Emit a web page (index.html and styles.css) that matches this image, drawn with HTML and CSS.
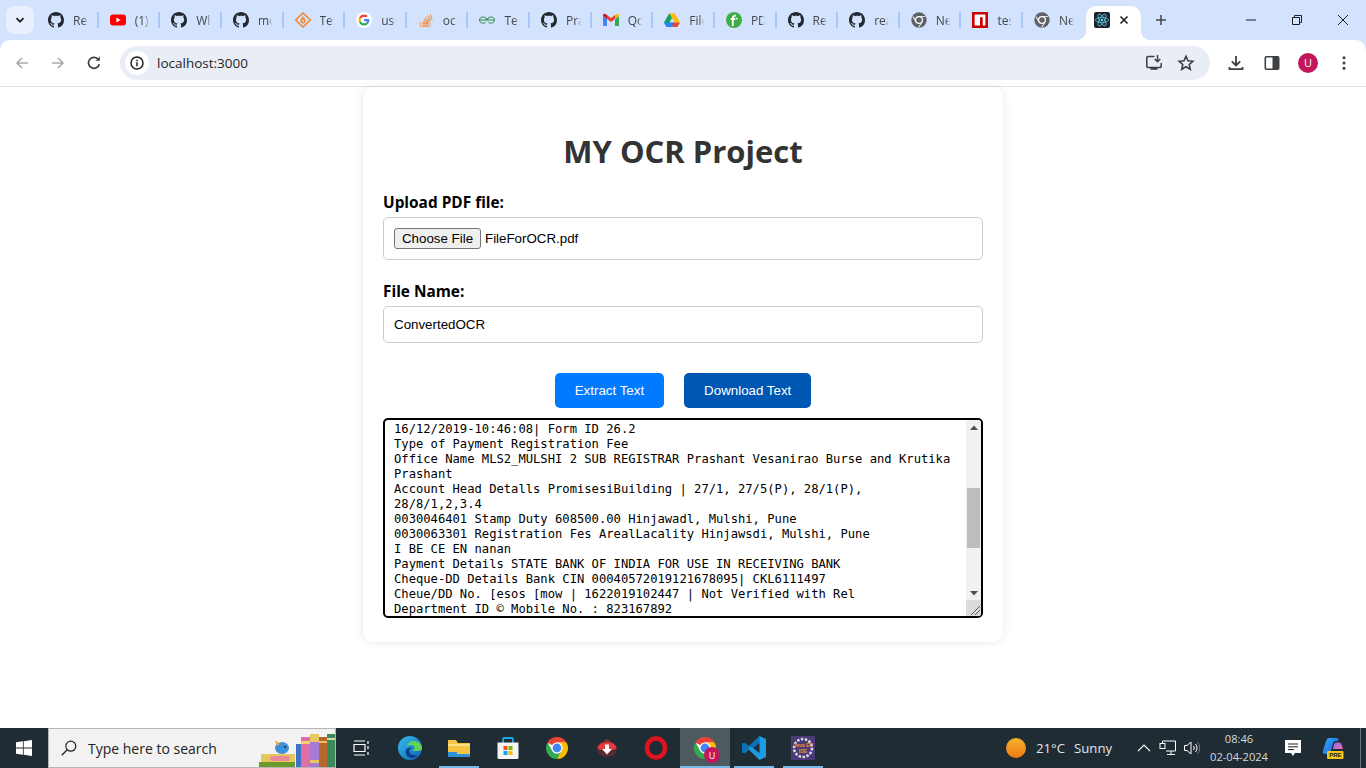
FILE: index.html
```html
<!DOCTYPE html>
<html lang="en">
<head>
<meta charset="utf-8">
<title>MY OCR Project</title>
<link rel="stylesheet" href="styles.css">
</head>
<body>
<svg class="defs" aria-hidden="true">
  <symbol id="gh" viewBox="0 0 16 16"><path fill="#24292f" d="M8 0C3.58 0 0 3.58 0 8c0 3.54 2.29 6.53 5.47 7.59.4.07.55-.17.55-.38 0-.19-.01-.82-.01-1.49-2.01.37-2.53-.49-2.69-.94-.09-.23-.48-.94-.82-1.13-.28-.15-.68-.52-.01-.53.63-.01 1.08.58 1.23.82.72 1.21 1.87.87 2.33.66.07-.52.28-.87.51-1.07-1.78-.2-3.64-.89-3.64-3.95 0-.87.31-1.59.82-2.15-.08-.2-.36-1.02.08-2.12 0 0 .67-.21 2.2.82.64-.18 1.32-.27 2-.27.68 0 1.36.09 2 .27 1.53-1.04 2.2-.82 2.2-.82.44 1.1.16 1.92.08 2.12.51.56.82 1.27.82 2.15 0 3.07-1.87 3.75-3.65 3.95.29.25.54.73.54 1.48 0 1.07-.01 1.93-.01 2.2 0 .21.15.46.55.38A8.013 8.013 0 0016 8c0-4.42-3.58-8-8-8z"/></symbol>
  <symbol id="grey" viewBox="0 0 24 24"><circle cx="12" cy="12" r="11.500" fill="#5f6368"/><circle cx="12" cy="12" r="6" fill="#fff"/><circle cx="12" cy="12" r="4.200" fill="#5f6368"/><path d="M12 6h9.500v1.300H12zM7 15l-4.700-8 1.100-.7L8 14zM16.900 15.200l-4.800 8-1.100-.7 4.800-8z" fill="#fff"/></symbol>
  <symbol id="chrome" viewBox="0 0 24 24"><circle cx="12" cy="12" r="10" fill="#fff"/><path fill="#ea4335" d="M12 1A11 11 0 0 1 21.530 6.500H12A5.500 5.500 0 0 0 7.240 9.250L2.470 6.500A11 11 0 0 1 12 1z"/><path fill="#fbbc04" d="M21.530 6.500A11 11 0 0 1 12 23L16.760 14.750A5.500 5.500 0 0 0 12 6.500z"/><path fill="#34a853" d="M2.470 6.500A11 11 0 0 0 12 23L16.760 14.750A5.500 5.500 0 0 1 7.240 14.750z"/><circle cx="12" cy="12" r="5.500" fill="#fff"/><circle cx="12" cy="12" r="4.400" fill="#4285f4"/></symbol>
</svg>

<header class="browser">
  <div class="tabstrip">
    <button class="tab-menu"><svg class="i12" viewBox="0 0 12 12"><path d="M2.500 4.200 6 7.700l3.500-3.500" fill="none" stroke="#1f1f1f" stroke-width="1.700"/></svg></button>
    <div class="tab"><svg class="fav"><use href="#gh"/></svg><span class="tab-t">Rep</span><i class="sep"></i></div>
    <div class="tab"><svg class="fav" viewBox="0 0 16 16"><rect y="2.500" width="16" height="11" rx="3" fill="#f00"/><path d="M6.400 5.600v4.800L10.600 8z" fill="#fff"/></svg><span class="tab-t">(1)</span><i class="sep"></i></div>
    <div class="tab"><svg class="fav"><use href="#gh"/></svg><span class="tab-t">Wh</span><i class="sep"></i></div>
    <div class="tab"><svg class="fav"><use href="#gh"/></svg><span class="tab-t">me</span><i class="sep"></i></div>
    <div class="tab"><svg class="fav" viewBox="0 0 16 16"><path d="M8 1 15.400 8 8 15 .6 8z" fill="none" stroke="#f4872f" stroke-width="1.600"/><path d="M8 4.200c1.700 2 2.600 3.300 2.600 4.600A2.600 2.600 0 0 1 8 11.400a2.600 2.600 0 0 1-2.600-2.600C5.400 7.500 6.300 6.200 8 4.200z" fill="#f4872f"/><path d="M8 7.500v2.500" stroke="#fff" stroke-width="1"/></svg><span class="tab-t">Tes</span><i class="sep"></i></div>
    <div class="tab"><svg class="fav" viewBox="0 0 48 48"><circle cx="24" cy="24" r="24" fill="#fff"/><g transform="translate(7.500 7.500) scale(.6875)"><path fill="#EA4335" d="M24 9.500c3.540 0 6.710 1.220 9.210 3.600l6.850-6.850C35.900 2.380 30.470 0 24 0 14.620 0 6.510 5.380 2.560 13.220l7.980 6.190C12.430 13.720 17.740 9.500 24 9.500z"/><path fill="#4285F4" d="M46.980 24.550c0-1.570-.15-3.090-.38-4.550H24v9.020h12.940c-.58 2.960-2.260 5.480-4.780 7.180l7.730 6c4.510-4.180 7.090-10.360 7.090-17.650z"/><path fill="#FBBC05" d="M10.530 28.590c-.48-1.450-.76-2.990-.76-4.590s.27-3.140.76-4.590l-7.980-6.190C.92 16.460 0 20.120 0 24c0 3.880.92 7.540 2.560 10.780l7.970-6.190z"/><path fill="#34A853" d="M24 48c6.480 0 11.930-2.130 15.890-5.810l-7.730-6c-2.150 1.450-4.920 2.300-8.160 2.300-6.260 0-11.570-4.220-13.470-9.910l-7.980 6.190C6.510 42.620 14.620 48 24 48z"/></g></svg><span class="tab-t">use</span><i class="sep"></i></div>
    <div class="tab"><svg class="fav" viewBox="0 0 16 16"><path d="M2.500 10v4.700h9.500V10" fill="none" stroke="#f4a460" stroke-width="1"/><path d="M4.300 13.200h5.900M4.400 11.400l5.900.5M4.900 9.400l5.700 1.300M5.900 7.300l5.300 2.500M7.400 5.300l4.600 3.500M9.600 3.600l3.300 4.800M12.200 2.300l1.900 5.400" stroke="#f48024" stroke-width="1" fill="none"/></svg><span class="tab-t">ocr</span><i class="sep"></i></div>
    <div class="tab"><svg class="fav" viewBox="0 0 16 16"><g fill="none" stroke="#2f8d46" stroke-width="1"><path d="M0 8h16"/><path d="M7.700 8A3.600 3.100 0 1 0 6.600 10.300M7.700 8 6.600 5.800"/><path d="M8.300 8A3.600 3.100 0 1 1 9.400 10.300M8.300 8 9.400 5.800"/></g></svg><span class="tab-t">Tes</span><i class="sep"></i></div>
    <div class="tab"><svg class="fav"><use href="#gh"/></svg><span class="tab-t">Pra</span><i class="sep"></i></div>
    <div class="tab"><svg class="fav" viewBox="0 0 16 16"><path fill="#4285f4" d="M1 14h3V7L0 4v8.700C0 13.500.5 14 1 14z"/><path fill="#34a853" d="M12 14h3c.5 0 1-.5 1-1.300V4l-4 3z"/><path fill="#ea4335" d="M4 7V3l4 3 4-3v4L8 10z"/><path fill="#c5221f" d="M0 4v-.8C0 1.900 1.500 1.200 2.500 2L4 3v4z"/><path fill="#fbbc04" d="M12 3l1.500-1c1-.8 2.500-.1 2.500 1.200V4l-4 3z"/></svg><span class="tab-t">Qo</span><i class="sep"></i></div>
    <div class="tab"><svg class="fav" viewBox="0 0 16 16"><path fill="#fbbc04" d="M5.300 1.300h5.400L16 10.600h-5.400z"/><path fill="#0fa15d" d="M5.300 1.300 0 10.600l2.700 4.400L8 6z"/><path fill="#2684fc" d="M5.300 10.600H0L2.700 15h6z"/><path fill="#ea4335" d="M5.300 10.600H16L13.300 15H8.700z"/><path fill="#2684fc" d="M5.300 10.600h4L8 15H2.700z"/></svg><span class="tab-t">File</span><i class="sep"></i></div>
    <div class="tab"><svg class="fav" viewBox="0 0 16 16"><circle cx="8" cy="8" r="8" fill="#3fae49"/><path d="M6.800 14V6.500C6.800 4.500 8 3.500 10 3.700M4.800 7h4.500" fill="none" stroke="#fff" stroke-width="1.800"/><circle cx="10.800" cy="6.600" r=".9" fill="#fff"/></svg><span class="tab-t">PDF</span><i class="sep"></i></div>
    <div class="tab"><svg class="fav"><use href="#gh"/></svg><span class="tab-t">Rep</span><i class="sep"></i></div>
    <div class="tab"><svg class="fav"><use href="#gh"/></svg><span class="tab-t">rea</span><i class="sep"></i></div>
    <div class="tab"><svg class="fav"><use href="#grey"/></svg><span class="tab-t">Ne</span><i class="sep"></i></div>
    <div class="tab"><svg class="fav" viewBox="0 0 16 16"><rect width="16" height="16" fill="#cb0000"/><path d="M2.600 2.600h10.800v10.800h-2.700V5.300H8v8.100H2.600z" fill="#fff"/></svg><span class="tab-t">tes</span><i class="sep"></i></div>
    <div class="tab"><svg class="fav"><use href="#grey"/></svg><span class="tab-t">Ne</span></div>
    <div class="tab-active">
      <svg class="fav" viewBox="0 0 16 16"><rect width="16" height="16" rx="2" fill="#20232a"/><g fill="none" stroke="#61dafb" stroke-width=".7"><ellipse cx="8" cy="8" rx="6.600" ry="2.600"/><ellipse cx="8" cy="8" rx="6.600" ry="2.600" transform="rotate(60 8 8)"/><ellipse cx="8" cy="8" rx="6.600" ry="2.600" transform="rotate(120 8 8)"/></g><circle cx="8" cy="8" r="1.300" fill="#61dafb"/></svg>
      <svg class="i12" viewBox="0 0 12 12"><path d="M2.500 2.500l7 7M9.500 2.500l-7 7" stroke="#1f1f1f" stroke-width="1.600"/></svg>
    </div>
    <button class="new-tab"><svg class="i12" viewBox="0 0 12 12"><path d="M6 1v10M1 6h10" stroke="#444746" stroke-width="1.500"/></svg></button>
    <div class="win-btns">
      <span class="win-btn"><svg class="i12" viewBox="0 0 12 12"><path d="M1 6h10" stroke="#1f1f1f"/></svg></span>
      <span class="win-btn"><svg class="i12" viewBox="0 0 12 12"><path d="M1.500 3.500h7v7h-7zM3.500 3.500v-2h7v7h-2" fill="none" stroke="#1f1f1f"/></svg></span>
      <span class="win-btn"><svg class="i12" viewBox="0 0 12 12"><path d="M1 1l10 10M11 1 1 11" stroke="#1f1f1f"/></svg></span>
    </div>
  </div>
  <div class="toolbar">
    <span class="tool"><svg class="i16" viewBox="0 0 16 16"><path d="M14 8H3M8 3 3 8l5 5" fill="none" stroke="#a9abad" stroke-width="1.600"/></svg></span>
    <span class="tool"><svg class="i16" viewBox="0 0 16 16"><path d="M2 8h11M8 3l5 5-5 5" fill="none" stroke="#a9abad" stroke-width="1.600"/></svg></span>
    <span class="tool"><svg class="i16" viewBox="0 0 16 16"><path d="M13.300 9.200A5.500 5.500 0 1 1 11.900 4" fill="none" stroke="#3c4043" stroke-width="1.700"/><path d="M13.800 1.500v4.300H9.500z" fill="#3c4043"/></svg></span>
    <div class="omnibox">
      <span class="info"><svg class="i16" viewBox="0 0 16 16"><circle cx="8" cy="8" r="6" fill="none" stroke="#1f1f1f" stroke-width="1.500"/><path d="M8 7.200v4M8 4.700v1.500" stroke="#1f1f1f" stroke-width="1.500"/></svg></span>
      <span class="url">localhost:3000</span>
      <span class="omni-icon"><svg class="i18" viewBox="0 0 18 18"><path d="M9.500 2.500H3a1.200 1.200 0 0 0-1.200 1.200v8.600A1.200 1.200 0 0 0 3 13.500h12a1.200 1.200 0 0 0 1.200-1.200V9" fill="none" stroke="#3c4043" stroke-width="1.500"/><path d="M5.500 15.800h7v-2h-7z" fill="#3c4043"/><path d="M12.500 1v6.500M9.700 5l2.800 2.800L15.300 5" fill="none" stroke="#3c4043" stroke-width="1.500"/></svg></span>
      <span class="omni-icon"><svg class="i18" viewBox="0 0 18 18"><path d="M9 2.300l2 4.500 4.900.5-3.700 3.200 1.100 4.800L9 12.800l-4.300 2.500 1.100-4.800L2.100 7.300 7 6.800z" fill="none" stroke="#3c4043" stroke-width="1.600"/></svg></span>
    </div>
    <span class="tool first-right"><svg class="i18" viewBox="0 0 18 18"><path d="M9 2v9.500M4.800 7.300 9 11.500l4.200-4.200" fill="none" stroke="#3c4043" stroke-width="1.800"/><path d="M2.500 13v2.200h13V13" fill="none" stroke="#3c4043" stroke-width="1.800"/></svg></span>
    <span class="tool"><svg class="i18" viewBox="0 0 18 18"><rect x="2.300" y="2.800" width="13.400" height="12.400" rx="1" fill="none" stroke="#3c4043" stroke-width="1.600"/><rect x="9.500" y="2.800" width="6.200" height="12.400" fill="#3c4043"/></svg></span>
    <span class="tool"><span class="avatar">U</span></span>
    <span class="tool"><svg class="i16" viewBox="0 0 16 16"><circle cx="8" cy="2.800" r="1.500" fill="#3c4043"/><circle cx="8" cy="8" r="1.500" fill="#3c4043"/><circle cx="8" cy="13.200" r="1.500" fill="#3c4043"/></svg></span>
  </div>
</header>

<main class="viewport">
  <section class="card">
    <h1 class="title">MY OCR Project</h1>
    <label class="label">Upload PDF file:</label>
    <div class="file-box"><span class="file-btn">Choose File</span><span class="file-name">FileForOCR.pdf</span></div>
    <label class="label label-second">File Name:</label>
    <input class="name-input" type="text" value="ConvertedOCR">
    <div class="actions">
      <button class="btn btn-extract">Extract Text</button>
      <button class="btn btn-download">Download Text</button>
    </div>
    <div class="output">
      <div class="output-text">16/12/2019-10:46:08| Form ID 26.2
Type of Payment Registration Fee
Office Name MLS2_MULSHI 2 SUB REGISTRAR Prashant Vesanirao Burse and Krutika
Prashant
Account Head Detalls PromisesiBuilding | 27/1, 27/5(P), 28/1(P),
28/8/1,2,3.4
0030046401 Stamp Duty 608500.00 Hinjawadl, Mulshi, Pune
0030063301 Registration Fes ArealLacality Hinjawsdi, Mulshi, Pune
I BE CE EN nanan
Payment Details STATE BANK OF INDIA FOR USE IN RECEIVING BANK
Cheque-DD Details Bank CIN 00040572019121678095| CKL6111497
Cheue/DD No. [esos [mow | 1622019102447 | Not Verified with Rel
Department ID © Mobile No. : 823167892</div>
      <div class="scrollbar">
        <span class="sb-arrow"><svg class="i8" viewBox="0 0 8 8"><path d="M0 6h8L4 1.500z" fill="#505050"/></svg></span>
        <span class="sb-track"><span class="sb-thumb"></span></span>
        <span class="sb-arrow"><svg class="i8" viewBox="0 0 8 8"><path d="M0 2h8L4 6.500z" fill="#505050"/></svg></span>
        <span class="sb-corner"><svg class="corner-svg" viewBox="0 0 15 16"><path d="M14 6 5 15M14 10l-5 5" stroke="#555" stroke-width="1"/></svg></span>
      </div>
    </div>
  </section>
</main>

<footer class="taskbar">
  <span class="start"><svg class="i16" viewBox="0 0 16 16"><path d="M0 2.300 6.900 1.300v6.300H0zM7.700 1.200 16 0v7.600H7.700zM0 8.400h6.900v6.300L0 13.700zM7.700 8.400H16V16l-8.300-1.200z" fill="#fff"/></svg></span>
  <div class="search">
    <svg class="i16" viewBox="0 0 16 16"><circle cx="9.800" cy="6.200" r="5" fill="none" stroke="#222" stroke-width="1.200"/><path d="M6.200 9.800 .8 15.200" stroke="#222" stroke-width="1.300"/></svg>
    <span class="search-text">Type here to search</span>
    <svg class="books" viewBox="0 0 78 40">
      <rect x="1" y="34" width="36" height="6" fill="#6a9a2e"/><rect x="3" y="26" width="34" height="8" fill="#e4c85c"/><rect x="12" y="28" width="20" height="5" rx="2.500" fill="#e88a9a"/>
      <ellipse cx="24" cy="20" rx="7" ry="6" fill="#3f8fdc"/><path d="M17 12l5 4-3 2z" fill="#f39c2b"/><circle cx="27" cy="19" r="1" fill="#123"/>
      <rect x="38" y="16" width="5" height="24" fill="#3f73c9"/><rect x="43" y="9" width="9" height="31" fill="#e06fa4"/><rect x="43" y="13" width="9" height="3" fill="#f2d36b"/>
      <rect x="52" y="6" width="9" height="34" fill="#a67ad4"/><rect x="52" y="6" width="9" height="8" fill="#e8c660"/><rect x="52" y="32" width="9" height="3" fill="#e8c660"/>
      <rect x="61" y="9" width="8" height="31" fill="#b8662f"/><rect x="61" y="13" width="8" height="2" fill="#f0c060"/>
      <rect x="69" y="6" width="9" height="34" fill="#3c8a5a"/><rect x="69" y="10" width="9" height="2" fill="#d5e0a0"/>
    </svg>
  </div>
  <div class="apps">
    <span class="app"><svg class="i20" viewBox="0 0 20 20"><path d="M3 3h11M3 17h11M3 6.500h11v7H3zM17 3v3M17 8v3M17 14v3" fill="none" stroke="#fff" stroke-width="1.200"/></svg></span>
    <span class="app"><svg class="i24" viewBox="0 0 24 24"><defs><linearGradient id="edge" x1="0" y1="0" x2="1" y2="1"><stop offset="0" stop-color="#35c1f1"/><stop offset="1" stop-color="#0b5fb0"/></linearGradient></defs><circle cx="12" cy="12" r="12" fill="url(#edge)"/><path d="M24 12.500c0-5-4-7.500-8-7.500-3.500 0-6.500 2-7 5.500 2-2 7-2.500 7.500 1 .2 1.500-1 2.500-2.500 3 3 1 10 1 10-2z" fill="#5fd35a"/><path d="M13 22c-4-1-6-4.500-5-8 1-2.500 4-3 6-2-2 .5-3 2-2.500 4 .6 2.400 4.500 4 8 3-1.500 1.800-4 3.500-6.500 3z" fill="#0f3f8a"/></svg></span>
    <span class="app app-on"><svg class="i24" viewBox="0 0 24 24"><path d="M1 4h8l2 3h12v14H1z" fill="#f4c542"/><rect x="1" y="8" width="22" height="2" fill="#fbe08a"/><path d="M1 16h9v2h13v3H1z" fill="#2f8fd8"/></svg></span>
    <span class="app"><svg class="i24" viewBox="0 0 24 24"><path d="M7 7V3.500A1.500 1.500 0 0 1 8.500 2h7A1.500 1.500 0 0 1 17 3.500V7" fill="none" stroke="#1ea7e8" stroke-width="1.800"/><path d="M1.500 6.500h21v15a1.500 1.500 0 0 1-1.500 1.500H3a1.500 1.500 0 0 1-1.500-1.500z" fill="#f4f4f4"/><rect x="7.500" y="10" width="4" height="4" fill="#f25022"/><rect x="12.500" y="10" width="4" height="4" fill="#7fba00"/><rect x="7.500" y="15" width="4" height="4" fill="#00a4ef"/><rect x="12.500" y="15" width="4" height="4" fill="#ffb900"/></svg></span>
    <span class="app"><svg class="i24"><use href="#chrome"/></svg></span>
    <span class="app"><svg class="i24" viewBox="0 0 24 24"><ellipse cx="12" cy="13" rx="10" ry="8" fill="#5a2a33"/><path d="M2.500 12c1-4 5-6 9.500-6s8.500 2 9.500 6c-2 3-5 1-9.500 1s-7.500 2-9.500-1z" fill="#e23a3f"/><path d="M10 8.500h4V13h3l-5 5.500L7 13h3z" fill="#fff"/><ellipse cx="12" cy="4.500" rx="2.500" ry="1" fill="#a33"/></svg></span>
    <span class="app"><svg class="i24" viewBox="0 0 24 24"><ellipse cx="12" cy="12" rx="9" ry="9.500" fill="none" stroke="#e0141f" stroke-width="4.500"/></svg></span>
    <span class="app app-active"><span class="app-badge-wrap"><svg class="i24"><use href="#chrome"/></svg><span class="app-badge">U</span></span></span>
    <span class="app app-on"><svg class="i24" viewBox="0 0 24 24"><path d="M17.500 0 24 3v18l-6.500 3L7 13.800 2.500 17.300 0 16V8l2.500-1.300L7 10.200zM17.500 7 11 12l6.500 5z" fill="#1e9be0" fill-rule="evenodd"/><path d="M17.500 0v7L11 12 7 10.200zM0 8l2.500-1.300L7 10.200v3.600L2.500 17.300 0 16z" fill="#0a6fb5"/></svg></span>
    <span class="app app-on"><svg class="i24" viewBox="0 0 24 24"><rect width="24" height="24" rx="1" fill="#4b3a7a"/><circle cx="12" cy="12" r="9" fill="none" stroke="#ddd" stroke-width="2.500" stroke-dasharray="2.500 1.500"/><text class="ide-text" x="12" y="10.500">Java EE</text><text class="ide-text" x="12" y="17">IDE</text></svg></span>
  </div>
  <div class="tray">
    <div class="weather"><span class="sun"></span><span class="temp">21°C</span><span class="cond">Sunny</span></div>
    <span class="tray-i"><svg class="i14" viewBox="0 0 14 14"><path d="M1 10l6-6 6 6" fill="none" stroke="#fff" stroke-width="1.100"/></svg></span>
    <span class="tray-i"><svg class="i18" viewBox="0 0 18 18"><path d="M3.500 4.500V2h13v10H7M12 12v3M8 15.500h8" fill="none" stroke="#fff"/><rect x="1" y="4.500" width="5" height="5" fill="none" stroke="#fff"/></svg></span>
    <span class="tray-i"><svg class="i18" viewBox="0 0 18 18"><path d="M1.500 6.500H4L8 3v12l-4-3.500H1.500zM10.500 7a3 3 0 0 1 0 4M12.500 5a6 6 0 0 1 0 8" fill="none" stroke="#fff"/><path d="M14.500 3a9 9 0 0 1 0 12" fill="none" stroke="#777"/></svg></span>
    <div class="clock"><span>08:46</span><span>02-04-2024</span></div>
    <span class="notify"><svg class="i18" viewBox="0 0 18 18"><path d="M1 1h16v13h-6l-2 3-2-3H1z" fill="#fff"/><path d="M4 5h10M4 7.800h10M4 10.600h6" stroke="#222" stroke-width="1"/></svg></span>
    <span class="copilot"><svg class="i22" viewBox="0 0 22 22"><defs><linearGradient id="cpa" x1="0" y1="0" x2="1" y2="1"><stop offset="0" stop-color="#27b6e8"/><stop offset=".55" stop-color="#2a7df0"/><stop offset="1" stop-color="#3ed6a0"/></linearGradient><linearGradient id="cpb" x1="0" y1="0" x2="1" y2="1"><stop offset="0" stop-color="#8a6cf0"/><stop offset="1" stop-color="#f06ab8"/></linearGradient></defs><path d="M7 1h7c1.500 0 2.300.8 2.800 2.500L14 4c-1.500 0-2.300.6-2.800 2.200L8.500 14.500C8 16 7 17 5.500 17H3C1 17 .4 15.500 1 13.700L4 4.300C4.600 2.300 5.500 1 7 1z" fill="url(#cpa)"/><path d="M14 5.500h3c1.300 0 2.200.8 2.700 2.200l1.300 4.300H10.800l1.300-4.400C12.500 6.200 13 5.500 14 5.500z" fill="url(#cpb)"/><rect x="5" y="14" width="16.500" height="8" rx="1" fill="#f5c518"/><text class="pre-text" x="13.300" y="20.300">PRE</text></svg></span>
    <span class="show-desktop"></span>
  </div>
</footer>
</body>
</html>
```

FILE: styles.css
```css
* { box-sizing: border-box; }
html, body { margin: 0; height: 100%; }
body {
  width: 1366px;
  height: 768px;
  overflow: hidden;
  display: flex;
  flex-direction: column;
  background: #fff;
  font-family: "Open Sans", sans-serif;
}
.defs { display: none; }
button { border: 0; background: none; padding: 0; font: inherit; }
svg { display: block; flex: none; }
.i8 { width: 8px; height: 8px; }
.i12 { width: 12px; height: 12px; }
.i14 { width: 14px; height: 14px; }
.i16 { width: 16px; height: 16px; }
.i18 { width: 18px; height: 18px; }
.i20 { width: 20px; height: 20px; }
.i22 { width: 22px; height: 22px; }
.i24 { width: 24px; height: 24px; }

/* browser chrome */
.browser { background: #d3e3fd; flex: none; }
.tabstrip { height: 40px; display: flex; align-items: stretch; }
.tab-menu {
  width: 28px; height: 28px; margin: 6px 3px 0 6px;
  border-radius: 8px; background: #e8f0fe;
  display: flex; align-items: center; justify-content: center;
}
.tab {
  width: 61.625px; flex: none;
  display: flex; align-items: center;
  padding-left: 11px;
  gap: 9px;
}
.fav { width: 16px; height: 16px; flex: none; }
.tab-t {
  width: 14.500px; overflow: hidden; white-space: nowrap;
  font-size: 12px; color: #45474a;
  -webkit-mask-image: linear-gradient(to right, #000 70%, transparent);
  mask-image: linear-gradient(to right, #000 70%, transparent);
}
.sep { width: 2px; height: 16px; margin-left: auto; background: #a8c7fa; }
.tab-active {
  position: relative;
  width: 55px; height: 34px; margin: 6px 0 0 1.500px;
  background: #fff; border-radius: 10px 10px 0 0;
  display: flex; align-items: center; justify-content: space-between;
  padding: 0 11px 6px 8px;
}
.tab-active::before, .tab-active::after {
  content: ""; position: absolute; bottom: 0; width: 10px; height: 10px;
}
.tab-active::before { left: -10px; background: radial-gradient(circle at 0 0, transparent 10px, #fff 10.500px); }
.tab-active::after { right: -10px; background: radial-gradient(circle at 100% 0, transparent 10px, #fff 10.500px); }
.new-tab { width: 28px; height: 28px; margin: 6px 0 0 6px; display: flex; align-items: center; justify-content: center; }
.win-btns { margin-left: auto; display: flex; }
.win-btn { width: 46px; height: 40px; display: flex; align-items: center; justify-content: center; }

.toolbar {
  height: 47px; padding: 6px 4px 7px;
  background: #fff; border-radius: 10px 10px 0 0;
  border-bottom: 1px solid #e3e3e3;
  display: flex; align-items: center;
}
.tool { width: 36px; height: 34px; display: flex; align-items: center; justify-content: center; flex: none; }
.first-right { margin-left: 8px; }
.omnibox {
  flex: 1; height: 34px; margin-left: 8px; padding: 0 12px 0 5px;
  background: #e9eef6; border-radius: 17px;
  display: flex; align-items: center;
}
.info { width: 24px; height: 24px; border-radius: 50%; background: #fff; display: flex; align-items: center; justify-content: center; }
.url { margin-left: 8px; font-size: 13.500px; color: #1f1f1f; flex: 1; }
.omni-icon { width: 24px; height: 24px; margin-left: 8px; display: flex; align-items: center; justify-content: center; }
.avatar {
  width: 20px; height: 20px; border-radius: 50%; background: #c2185b;
  color: #fff; font-size: 11px; display: flex; align-items: center; justify-content: center;
}

/* page */
.viewport { flex: 1; display: flex; justify-content: center; align-items: flex-start; min-height: 0; }
.card {
  width: 640px; padding: 20px 20px 24px;
  background: #fff; border-radius: 10px;
  box-shadow: 0 0 10px rgba(0, 0, 0, .1);
  display: flex; flex-direction: column;
}
.title {
  margin: 22px 0 19px; text-align: center;
  font-size: 31px; line-height: 44px; font-weight: 700; color: #333;
}
.label { font-size: 15.400px; line-height: 20px; font-weight: 700; color: #000; margin: 1px 0 4px; }
.label-second { margin-top: 22px; }
.file-box {
  height: 43px; padding: 0 10px;
  border: 1px solid #ccc; border-radius: 5px;
  display: flex; align-items: center;
  font: 13.330px "Liberation Sans", sans-serif; color: #000;
}
.file-btn {
  width: 87px; height: 21px; background: #efefef;
  border: 1px solid #767676; border-radius: 3px;
  display: flex; align-items: center; justify-content: center;
}
.file-name { margin-left: 4px; }
.name-input {
  height: 37px; padding: 0 10px; width: 100%;
  border: 1px solid #ccc; border-radius: 5px;
  font: 13.330px "Liberation Sans", sans-serif; color: #000; background: #fff;
}
.actions { margin-top: 30px; display: flex; justify-content: center; gap: 20px; }
.btn {
  height: 35px; padding: 0 20px; border-radius: 5px; color: #fff;
  font: 13.330px "Liberation Sans", sans-serif;
}
.btn-extract { background: #007bff; }
.btn-download { background: #0056b3; }
.output {
  height: 200px; margin-top: 10px;
  border: 2px solid #000; border-radius: 5px;
  display: flex; overflow: hidden; background: #fff;
}
.output-text {
  flex: 1; padding: 2px 0 0 9px; overflow: hidden;
  white-space: pre; font: 12.170px/15px "DejaVu Sans Mono", monospace; color: #000;
}
.scrollbar { width: 15px; display: flex; flex-direction: column; background: #f1f1f1; flex: none; }
.sb-arrow { height: 15px; display: flex; align-items: center; justify-content: center; }
.sb-track { height: 150px; }
.sb-thumb { display: block; height: 60px; margin: 53px 1px 0; background: #bdbdbd; }
.sb-corner { height: 16px; background: #dcdcdc; }
.corner-svg { width: 15px; height: 16px; }

/* taskbar */
.taskbar {
  height: 40px; flex: none; background: #1f2c34;
  display: flex; align-items: stretch; color: #fff;
}
.start { width: 48px; display: flex; align-items: center; justify-content: center; }
.search {
  width: 288px; padding-left: 12px;
  background: #f2f2f2; border: 1px solid #b5b5b5;
  display: flex; align-items: center; overflow: hidden;
}
.search-text { margin-left: 11px; font-size: 14px; color: #222; white-space: nowrap; }
.books { width: 78px; height: 40px; margin-left: auto; margin-right: -1px; }
.apps { display: flex; }
.app { position: relative; width: 49.200px; display: flex; align-items: center; justify-content: center; }
.app-on::after, .app-active::after {
  content: ""; position: absolute; bottom: 0; left: 4.600px; right: 4.600px; height: 2px; background: #76b9ed;
}
.app-active { background: #4d5a5e; }
.app-active::after { left: 0; right: 0; }
.app-badge-wrap { position: relative; }
.app-badge {
  position: absolute; right: -3px; bottom: -3px;
  width: 16px; height: 16px; border-radius: 50%; background: #c2185b;
  font-size: 9px; color: #fff; display: flex; align-items: center; justify-content: center;
}
.ide-text { font: 700 5px "Liberation Sans", sans-serif; fill: #e8912d; text-anchor: middle; }
.pre-text { font: 700 6px "Liberation Sans", sans-serif; fill: #222; text-anchor: middle; }
.tray { margin-left: auto; display: flex; align-items: center; height: 40px; }
.weather { width: 126px; display: flex; align-items: center; font-size: 13.200px; color: #e6e6e6; }
.sun { width: 20px; height: 20px; border-radius: 50%; background: linear-gradient(#f5b02c, #ee7a12); }
.temp { margin-left: 10px; }
.cond { margin-left: 9px; }
.tray-i { width: 24px; display: flex; justify-content: center; }
.clock { width: 70px; display: flex; flex-direction: column; align-items: center; font-size: 11.100px; line-height: 18px; color: #d9d9d9; }
.notify { width: 38px; display: flex; justify-content: center; }
.copilot { width: 42px; display: flex; justify-content: center; }
.show-desktop { width: 1px; height: 40px; margin: 0 5px 0 6px; background: #6c7478; }
```
